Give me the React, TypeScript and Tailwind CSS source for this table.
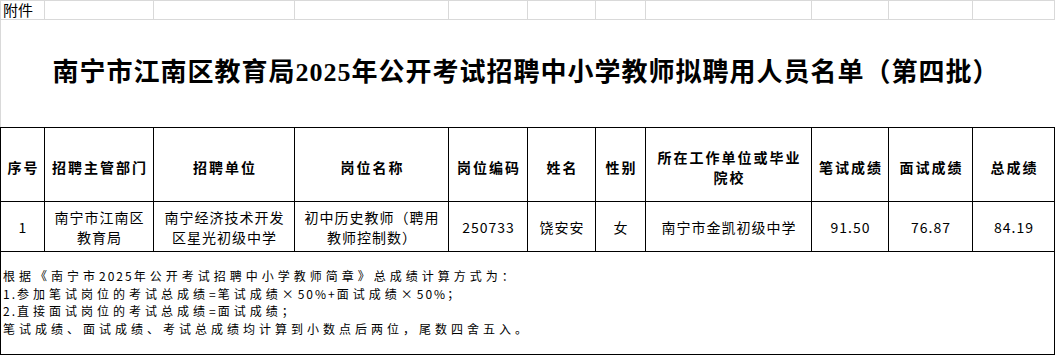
import React from "react";

const cols =
  "grid grid-cols-[44px_109px_141px_154px_79px_68px_50px_166px_77px_84px_82px]";

const sans = { fontFamily: '"Noto Sans CJK SC", sans-serif' };

const headers: React.ReactNode[] = [
  "序号",
  "招聘主管部门",
  "招聘单位",
  "岗位名称",
  "岗位编码",
  "姓名",
  "性别",
  <>
    所在工作单位或毕业
    <br />
    院校
  </>,
  "笔试成绩",
  "面试成绩",
  "总成绩",
];

const row: React.ReactNode[] = [
  "1",
  <>
    南宁市江南区
    <br />
    教育局
  </>,
  <>
    南宁经济技术开发
    <br />
    区星光初级中学
  </>,
  <>
    初中历史教师（聘用
    <br />
    教师控制数）
  </>,
  "250733",
  "饶安安",
  "女",
  "南宁市金凯初级中学",
  "91.50",
  "76.87",
  "84.19",
];

function N({ children }: { children: React.ReactNode }) {
  return <span className="tracking-[2px]">{children}</span>;
}

export default function App() {
  return (
    <div className="w-[1055px] h-[357px] bg-white overflow-hidden text-black" style={sans}>
      {/* grid row with 附件 */}
      <div className={`${cols} h-[20px] border-t border-l border-[#d9d9d9]`}>
        {headers.map((_, i) => (
          <div
            key={i}
            className="border-r border-b border-[#d9d9d9] text-[15px] leading-[18px] pl-[2px] whitespace-nowrap"
          >
            {i === 0 ? "附件" : ""}
          </div>
        ))}
      </div>
      {/* title row */}
      <div className="h-[107px] border-l border-[#d9d9d9] flex items-center justify-center">
        <div
          className="text-[26px] font-bold tracking-[1px] leading-none pb-[2px] pr-[4px]"
          style={{ fontFamily: '"Liberation Serif", "Noto Sans CJK SC", serif' }}
        >
          南宁市江南区教育局2025年公开考试招聘中小学教师拟聘用人员名单（第四批）
        </div>
      </div>
      {/* table */}
      <div className={`${cols} border-t border-l border-black`}>
        {headers.map((h, i) => (
          <div
            key={"h" + i}
            className="h-[74px] border-r border-b border-black flex items-center justify-center text-center font-bold text-[14px] leading-[20px] tracking-[2px] pl-[2px] pt-[4px] whitespace-nowrap"
          >
            <div>{h}</div>
          </div>
        ))}
        {row.map((c, i) => (
          <div
            key={"d" + i}
            className="h-[50px] border-r border-b border-black flex items-center justify-center text-center text-[14px] leading-[20px] tracking-[1px] pl-[1px] whitespace-nowrap"
          >
            <div>{c}</div>
          </div>
        ))}
        <div className="col-span-11 h-[103px] border-r border-b border-black pl-[2px] pt-[15px] text-[12px] leading-[17.5px] tracking-[4px] whitespace-nowrap">
          <div>
            根据《南宁市<N>2025</N>年公开考试招聘中小学教师简章》总成绩计算方式为：
          </div>
          <div>
            <N>1.</N>参加笔试岗位的考试总成绩<N>=</N>笔试成绩×<N>50%+</N>面试成绩×<N>50%</N>；
          </div>
          <div>
            <N>2.</N>直接面试岗位的考试总成绩<N>=</N>面试成绩；
          </div>
          <div>笔试成绩、面试成绩、考试总成绩均计算到小数点后两位，尾数四舍五入。</div>
        </div>
      </div>
    </div>
  );
}
